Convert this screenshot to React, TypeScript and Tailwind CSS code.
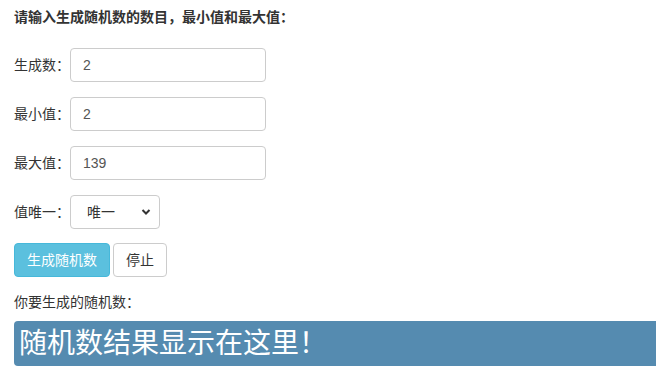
import React from "react";

const font = { fontFamily: '"Liberation Sans", "Noto Sans CJK SC", sans-serif' };

const Field: React.FC<{ label: string; value: string }> = ({ label, value }) => {
    return (
        <div className="flex items-center h-[34px] mb-[15px]">
            <label className="w-[56px] text-[14px] text-[#333]">{label}</label>
            <input
                className="h-[34px] w-[196px] border border-[#ccc] rounded-[4px] px-[12px] text-[14px] text-[#555] outline-none"
                defaultValue={value}
            />
        </div>
    );
};

export default function App() {
    return (
        <div className="w-[656px] h-[384px] bg-white pt-[7px] pl-[14px] overflow-hidden" style={font}>
            <h4 className="leading-[20px] text-[14px] font-bold text-[#333] mb-[21px]">
                请输入生成随机数的数目，最小值和最大值：
            </h4>
            <Field label="生成数：" value="2" />
            <Field label="最小值：" value="2" />
            <Field label="最大值：" value="139" />
            <div className="flex items-center h-[34px] mb-[14px]">
                <label className="w-[56px] text-[14px] text-[#333]">值唯一：</label>
                {/* SELECT */}
                <div className="relative h-[34px] w-[90px]">
                    <select className="appearance-none h-[34px] w-[90px] border border-[#ccc] rounded-[4px] pl-[16px] text-[14px] text-[#333] bg-white outline-none">
                        <option>唯一</option>
                        <option>不唯一</option>
                    </select>
                    <svg
                        className="absolute right-[9px] top-[13px] pointer-events-none"
                        width="10"
                        height="8"
                        viewBox="0 0 10 8"
                    >
                        <path d="M1.5 2 L5 5.5 L8.5 2" stroke="#333" strokeWidth="2" fill="none" />
                    </svg>
                </div>
            </div>
            {/* BUTTONS */}
            <div className="flex gap-[3px] mb-[15px]">
                <button className="h-[34px] px-[12px] bg-[#5bc0de] border border-[#46b8da] rounded-[4px] text-white text-[14px]">
                    生成随机数
                </button>
                <button className="h-[34px] px-[12px] bg-white border border-[#ccc] rounded-[4px] text-[#333] text-[14px]">
                    停止
                </button>
            </div>
            <p className="leading-[20px] text-[14px] text-[#333] mb-[9px]">你要生成的随机数：</p>
            <div className="h-[45px] bg-[#558bb0] rounded-l-[4px] flex items-center pl-[5px]">
                <span className="text-white text-[28px] leading-none">随机数结果显示在这里！</span>
            </div>
        </div>
    );
}
